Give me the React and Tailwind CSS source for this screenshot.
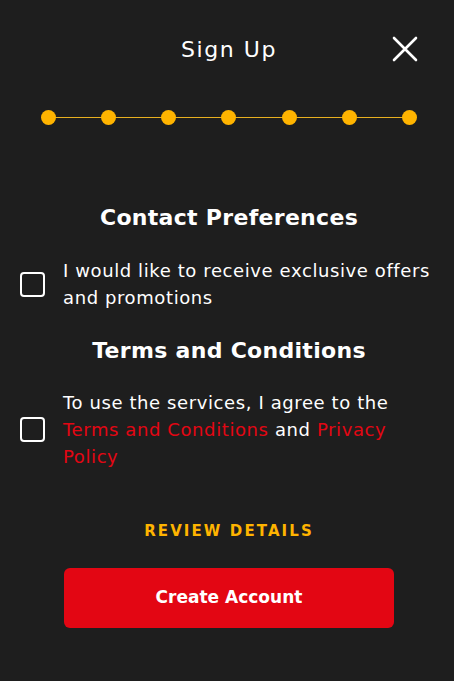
export default function App() {
  const dots = [0, 1, 2, 3, 4, 5, 6];
  return (
    <div className="w-[454px] h-[681px] bg-[#1e1e1e] text-white overflow-hidden" style={{ fontFamily: '"DejaVu Sans", sans-serif' }}>
      <div className="relative h-[100px] flex items-start justify-center pt-[36px] pl-[4px]">
        <h1 className="text-[22px] leading-[28px] font-medium tracking-[1.6px]">Sign Up</h1>
        <button className="absolute right-[36px] top-[36px] w-[26px] h-[26px] flex items-center justify-center">
          <svg width="26" height="26" viewBox="0 0 26 26" fill="none" stroke="white" strokeWidth="2.6" strokeLinecap="round">
            <path d="M2 2L24 24M24 2L2 24" />
          </svg>
        </button>
      </div>
      <div className="relative ml-[41px] w-[376px] h-[34px] flex items-center justify-between">
        <div className="absolute left-[7px] right-[7px] top-1/2 h-px bg-[#e8b020]" />
        {dots.map((d) => (
          <div key={d} className="relative w-[15px] h-[15px] rounded-full bg-[#ffb400]" />
        ))}
      </div>
      <div className="pl-[20px] pr-[16px] pt-[69px]">
        <h2 className="text-center text-[22px] leading-[30px] font-bold tracking-[0.3px]">Contact Preferences</h2>
        <div className="mt-[24px] flex items-center gap-[18px]">
          <div className="w-[25px] h-[25px] border-[2.5px] border-white rounded-[4px] shrink-0" />
          <p className="text-[18px] leading-[27px] whitespace-nowrap tracking-[0.6px]">I would like to receive exclusive offers<br />and promotions</p>
        </div>
        <h2 className="mt-[25px] text-center text-[22px] leading-[30px] font-bold tracking-[0.3px]">Terms and Conditions</h2>
        <div className="mt-[23px] flex items-center gap-[18px]">
          <div className="w-[25px] h-[25px] border-[2.5px] border-white rounded-[4px] shrink-0" />
          <p className="text-[18px] leading-[27px] whitespace-nowrap tracking-[0.6px]">
            To use the services, I agree to the<br />
            <span className="text-[#e30613]">Terms and Conditions</span> and <span className="text-[#e30613]">Privacy</span><br />
            <span className="text-[#e30613]">Policy</span>
          </p>
        </div>
        <div className="mt-[51px] text-center text-[15px] leading-[20px] font-bold tracking-[2.1px] text-[#ffb400]">REVIEW DETAILS</div>
        <div className="mt-[27px] flex justify-center">
          <button className="w-[330px] h-[60px] rounded-[6px] bg-[#e30613] text-[17px] font-bold text-white">Create Account</button>
        </div>
      </div>
    </div>
  );
}
